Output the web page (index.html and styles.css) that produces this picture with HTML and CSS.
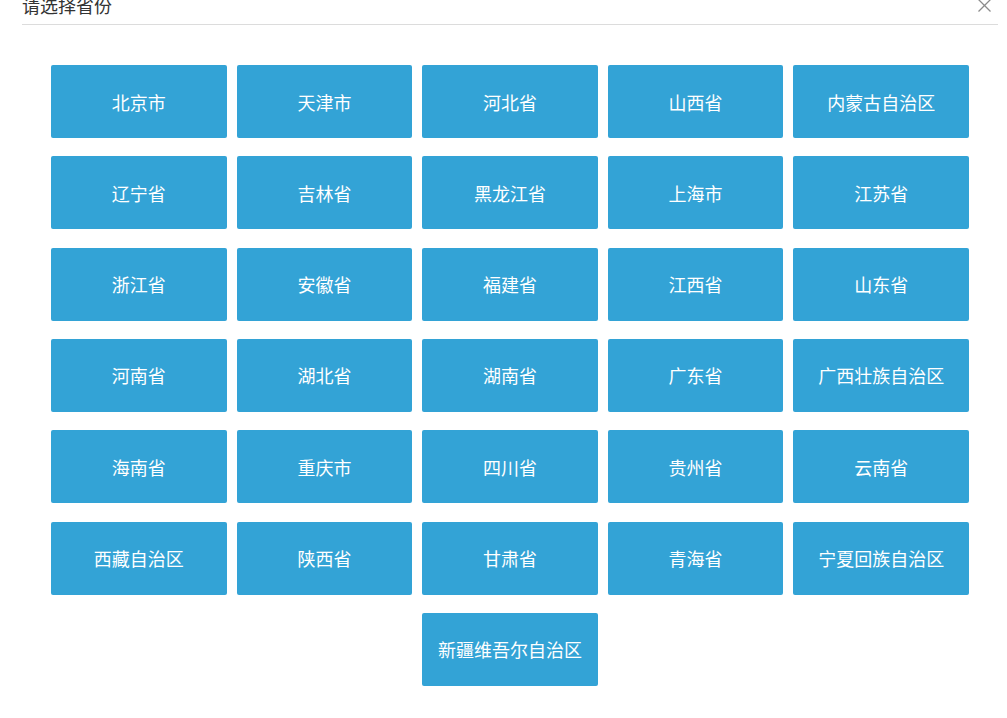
FILE: index.html
```html
<!DOCTYPE html>
<html lang="zh-CN">
<head>
<meta charset="utf-8">
<title>请选择省份</title>
<link rel="stylesheet" href="styles.css">
</head>
<body>
<div class="dialog">
  <div class="header">
    <span class="title">请选择省份</span>
    <span class="close">
      <svg width="13" height="13" viewBox="0 0 13 13"><path d="M0.5 0.5 L12.5 12.5 M12.5 0.5 L0.5 12.5" stroke="#8c8c8c" stroke-width="1.3" fill="none"/></svg>
    </span>
  </div>
  <div class="grid">
    <div class="btn">北京市</div>
    <div class="btn">天津市</div>
    <div class="btn">河北省</div>
    <div class="btn">山西省</div>
    <div class="btn">内蒙古自治区</div>
    <div class="btn">辽宁省</div>
    <div class="btn">吉林省</div>
    <div class="btn">黑龙江省</div>
    <div class="btn">上海市</div>
    <div class="btn">江苏省</div>
    <div class="btn">浙江省</div>
    <div class="btn">安徽省</div>
    <div class="btn">福建省</div>
    <div class="btn">江西省</div>
    <div class="btn">山东省</div>
    <div class="btn">河南省</div>
    <div class="btn">湖北省</div>
    <div class="btn">湖南省</div>
    <div class="btn">广东省</div>
    <div class="btn">广西壮族自治区</div>
    <div class="btn">海南省</div>
    <div class="btn">重庆市</div>
    <div class="btn">四川省</div>
    <div class="btn">贵州省</div>
    <div class="btn">云南省</div>
    <div class="btn">西藏自治区</div>
    <div class="btn">陕西省</div>
    <div class="btn">甘肃省</div>
    <div class="btn">青海省</div>
    <div class="btn">宁夏回族自治区</div>
    <div class="btn">新疆维吾尔自治区</div>
  </div>
</div>
</body>
</html>
```
FILE: styles.css
```css
html, body {
  margin: 0;
  padding: 0;
  background: #ffffff;
  overflow: hidden;
}
body {
  font-family: "Microsoft YaHei", "Noto Sans CJK SC", "Noto Sans", sans-serif;
}
.dialog {
  width: 1007px;
}
.header {
  margin-top: -4px;
  margin-left: 22px;
  width: 976px;
  display: flex;
  justify-content: space-between;
  align-items: flex-start;
  padding-bottom: 10px;
  border-bottom: 1px solid #dcdcdc;
}
.title {
  font-size: 18px;
  line-height: 18px;
  color: #333333;
}
.close {
  display: flex;
  margin-top: 3px;
  margin-right: 7px;
}
.grid {
  margin: 40px 0 0 51px;
  width: 918px;
  display: flex;
  flex-wrap: wrap;
  justify-content: center;
  gap: 18.33px 10px;
}
.btn {
  width: calc((100% - 40px) / 5);
  height: 73px;
  background: #33a3d6;
  border-radius: 2px;
  color: #ffffff;
  font-size: 18px;
  display: flex;
  align-items: center;
  justify-content: center;
}
```
